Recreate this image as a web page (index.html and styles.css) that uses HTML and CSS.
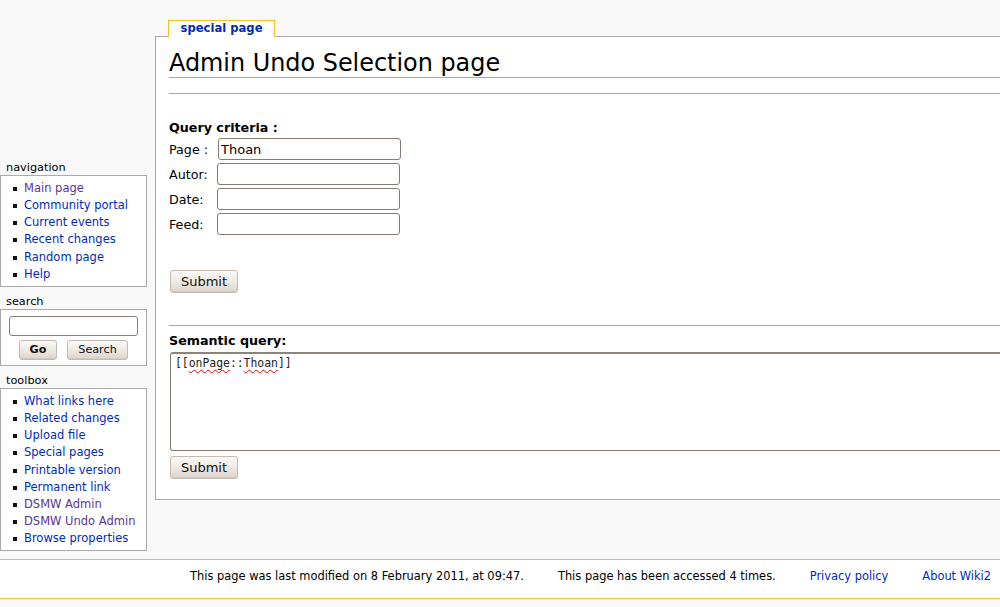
FILE: index.html
```html
<!DOCTYPE html>
<html lang="en">
<head>
<meta charset="utf-8">
<title>Admin Undo Selection page</title>
<link rel="stylesheet" href="styles.css">
</head>
<body>
<div class="layout">
  <aside class="sidebar">
    <div class="portlet">
      <h3 class="portlet-title">navigation</h3>
      <div class="portlet-box">
        <ul class="portlet-list">
          <li><a class="visited" href="#">Main page</a></li>
          <li><a href="#">Community portal</a></li>
          <li><a href="#">Current events</a></li>
          <li><a href="#">Recent changes</a></li>
          <li><a href="#">Random page</a></li>
          <li><a href="#">Help</a></li>
        </ul>
      </div>
    </div>
    <div class="portlet">
      <h3 class="portlet-title">search</h3>
      <div class="portlet-box search-box">
        <input class="search-input" type="text">
        <div class="search-buttons">
          <button class="btn btn-small btn-bold" type="button">Go</button>
          <button class="btn btn-small" type="button">Search</button>
        </div>
      </div>
    </div>
    <div class="portlet">
      <h3 class="portlet-title">toolbox</h3>
      <div class="portlet-box">
        <ul class="portlet-list">
          <li><a href="#">What links here</a></li>
          <li><a href="#">Related changes</a></li>
          <li><a href="#">Upload file</a></li>
          <li><a href="#">Special pages</a></li>
          <li><a href="#">Printable version</a></li>
          <li><a href="#">Permanent link</a></li>
          <li><a class="visited" href="#">DSMW Admin</a></li>
          <li><a class="visited" href="#">DSMW Undo Admin</a></li>
          <li><a href="#">Browse properties</a></li>
        </ul>
      </div>
    </div>
  </aside>

  <main class="main">
    <div class="tabs">
      <span class="tab">special page</span>
    </div>
    <div class="content">
      <h1 class="page-title">Admin Undo Selection page</h1>
      <hr class="rule rule-first">
      <form class="criteria">
        <div class="section-label">Query criteria :</div>
        <div class="field-grid">
          <label class="field-label">Page :</label>
          <input class="field-input field-input-page" type="text" value="Thoan">
          <label class="field-label">Autor:</label>
          <input class="field-input" type="text">
          <label class="field-label">Date:</label>
          <input class="field-input" type="text">
          <label class="field-label">Feed:</label>
          <input class="field-input" type="text">
        </div>
        <button class="btn btn-submit btn-first" type="button">Submit</button>
      </form>
      <hr class="rule rule-second">
      <form class="semantic">
        <div class="section-label section-semantic">Semantic query:</div>
        <div class="query-area" role="textbox" aria-multiline="true">[[<span class="misspelled">onPage</span>::<span class="misspelled">Thoan</span>]]</div>
        <button class="btn btn-submit btn-second" type="button">Submit</button>
      </form>
    </div>
  </main>
</div>

<footer class="footer">
  <ul class="footer-list">
    <li class="footer-item">This page was last modified on 8 February 2011, at 09:47.</li>
    <li class="footer-item">This page has been accessed 4 times.</li>
    <li class="footer-item"><a href="#">Privacy policy</a></li>
    <li class="footer-item"><a href="#">About Wiki2</a></li>
  </ul>
</footer>
</body>
</html>
```

FILE: styles.css
```css
html, body {
  margin: 0;
  padding: 0;
  overflow: hidden;
}

body {
  background: #f9f9f9;
  font-family: "DejaVu Sans", "Noto Sans", sans-serif;
  color: #000;
  width: 1000px;
  height: 607px;
}

a {
  color: #002bb8;
  text-decoration: none;
}

a.visited {
  color: #5a3696;
}

.layout {
  display: flex;
  align-items: flex-start;
  height: 552px;
  margin-bottom: 7px;
}

/* ---------- sidebar ---------- */
.sidebar {
  flex: none;
  width: 147px;
  padding-top: 161px;
}

.portlet + .portlet {
  margin-top: 8px;
}

.portlet-title {
  margin: 0;
  padding-left: 6px;
  font-size: 11.3px;
  font-weight: normal;
  line-height: 14px;
  height: 14px;
}

.portlet-box {
  background: #fff;
  border: 1px solid #aaa;
}

.portlet-list {
  list-style: none;
  margin: 0;
  padding: 4px 0 3px;
  font-size: 11.5px;
  line-height: 17.15px;
}

.portlet-list li {
  position: relative;
  padding-left: 23px;
  white-space: nowrap;
}

.portlet-list li::before {
  content: "";
  position: absolute;
  left: 12px;
  top: 7px;
  width: 4px;
  height: 4px;
  background: #111;
}

.search-box {
  padding: 6px 0 5px;
  display: flex;
  flex-direction: column;
  align-items: center;
}

.search-input {
  box-sizing: border-box;
  width: 129px;
  height: 20px;
  margin: 0;
  border: 1px solid #8a8077;
  border-radius: 3px;
  background: #fff;
}

.search-buttons {
  display: flex;
  gap: 10px;
  margin-top: 4px;
}

/* ---------- buttons ---------- */
.btn {
  box-sizing: border-box;
  margin: 0;
  font-family: "DejaVu Sans", sans-serif;
  color: #111;
  border: 1px solid #c4bab0;
  border-radius: 3px;
  background: linear-gradient(#fbfaf9, #ece7e2 55%, #ddd5cd);
  box-shadow: inset 0 -1px 0 #d2c9c0;
  padding: 0;
}

.btn-small {
  height: 20px;
  font-size: 11.2px;
  line-height: 17px;
}

.btn-small:first-child {
  width: 38px;
}

.btn-small:last-child {
  width: 61px;
}

.btn-bold {
  font-weight: bold;
}

.btn-submit {
  display: block;
  width: 68px;
  height: 23px;
  font-size: 13px;
  line-height: 20px;
  margin-left: 1px;
}

/* ---------- main content ---------- */
.main {
  flex: 1;
  margin-left: 8px;
  margin-right: -40px;
  padding-top: 20px;
}

.tabs {
  display: flex;
  padding-left: 13px;
  margin-bottom: -1px;
  position: relative;
  z-index: 1;
}

.tab {
  box-sizing: border-box;
  height: 17px;
  width: 107px;
  text-align: center;
  background: #fff;
  border: 1px solid #fabd23;
  border-bottom: 0;
  color: #002bb8;
  font-weight: bold;
  font-size: 11.6px;
  line-height: 14px;
  padding-top: 0;
}

.content {
  background: #fff;
  border: 1px solid #aaa;
  padding: 12px 0 20px 13px;
  font-size: 12.7px;
  line-height: 19px;
}

.page-title {
  margin: 0;
  font-size: 23.9px;
  font-weight: normal;
  line-height: 28px;
  border-bottom: 1px solid #aaa;
}

.rule {
  border: 0;
  height: 1px;
  background: #aaa;
  margin: 0;
}

.rule-first {
  margin-top: 15px;
}

.criteria {
  margin: 24px 0 0;
}

.section-label {
  font-weight: bold;
}

.field-grid {
  display: grid;
  grid-template-columns: 48px 183px;
  grid-auto-rows: 22px;
  row-gap: 3px;
  align-items: center;
  margin-top: 1px;
}

.field-label {
  white-space: nowrap;
}

.field-input {
  box-sizing: border-box;
  width: 183px;
  height: 22px;
  margin: 0;
  border: 1px solid #877c72;
  border-radius: 3px;
  background: #fff;
  font-family: "DejaVu Sans", sans-serif;
  font-size: 13px;
  padding: 0 2px;
  color: #000;
}

.field-input-page {
  margin-left: 1px;
}

.btn-first {
  margin-top: 35px;
}

.rule-second {
  margin-top: 32px;
}

.semantic {
  margin: 5px 0 0;
}

.query-area {
  box-sizing: border-box;
  height: 99px;
  margin: 2px 0 0 1px;
  border: 1px solid #877c72;
  border-top: 2px solid #8e8379;
  border-radius: 3px 0 0 3px;
  background: #fff;
  font-family: "DejaVu Sans Mono", monospace;
  font-size: 11.4px;
  line-height: 14px;
  padding: 2px 4px;
  color: #222;
  white-space: pre;
}

.misspelled {
  text-decoration: underline wavy #e00;
  text-decoration-thickness: 1px;
  text-underline-offset: 2px;
  text-decoration-skip-ink: none;
}

.btn-second {
  margin-top: 5px;
}

/* ---------- footer ---------- */
.footer {
  box-sizing: border-box;
  height: 40px;
  background: #fff;
  border-top: 1px solid #fabd23;
  border-bottom: 1px solid #fabd23;
  font-size: 11.43px;
  line-height: 16px;
}

.footer-list {
  list-style: none;
  display: flex;
  gap: 34px;
  margin: 0;
  padding: 8px 0 0 190px;
}

.footer-item {
  white-space: nowrap;
}
```
